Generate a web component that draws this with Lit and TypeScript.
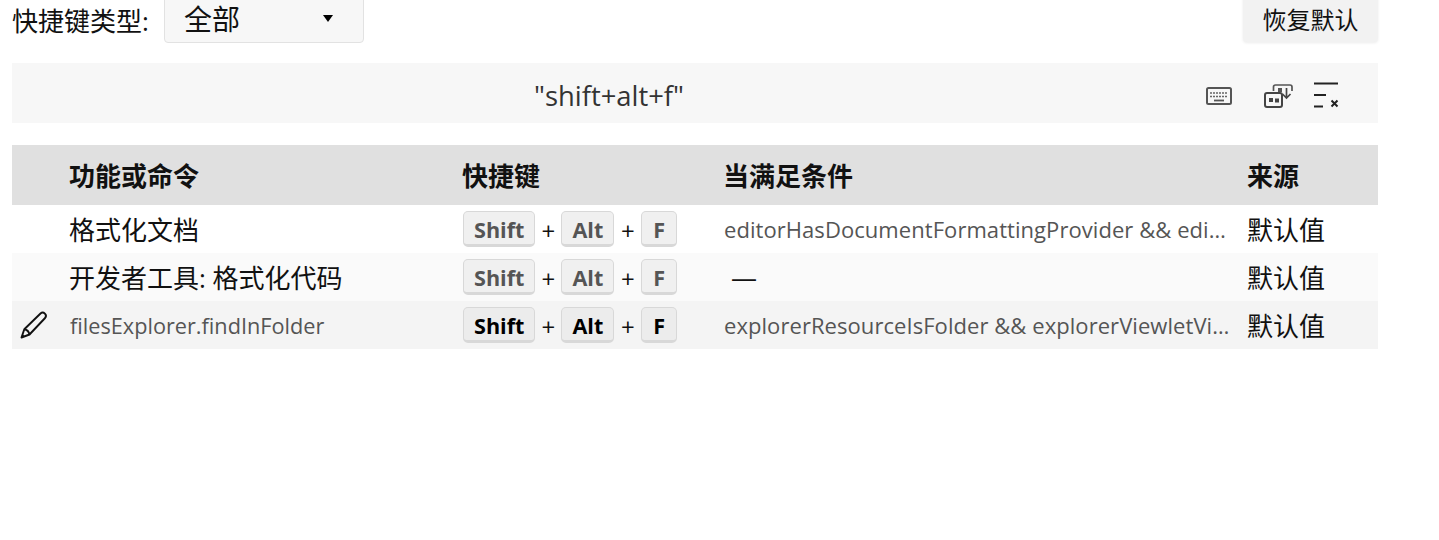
import { LitElement, html, css, svg, unsafeCSS } from "lit";
import { customElement } from "lit/decorators.js";

const FONT = unsafeCSS(`"Open Sans", "Noto Sans CJK SC", sans-serif`);

interface Row {
  command: string;
  keys: string[];
  when: string;
  source: string;
  latin?: boolean;
  editing?: boolean;
}

const ROWS: Row[] = [
  {
    command: "格式化文档",
    keys: ["Shift", "Alt", "F"],
    when: "editorHasDocumentFormattingProvider && editor",
    source: "默认值",
  },
  {
    command: "开发者工具: 格式化代码",
    keys: ["Shift", "Alt", "F"],
    when: "—",
    source: "默认值",
  },
  {
    command: "filesExplorer.findInFolder",
    keys: ["Shift", "Alt", "F"],
    when: "explorerResourceIsFolder && explorerViewletVisib",
    source: "默认值",
    latin: true,
    editing: true,
  },
];

const keyboardIcon = svg`<svg width="28" height="20" viewBox="0 0 28 20" fill="none">
  <rect x="2" y="2" width="24" height="16" rx="1.5" stroke="#555" stroke-width="2"/>
  <path d="M5 7h18M5 10.500h18" stroke="#666" stroke-width="1.500" stroke-dasharray="2 1"/>
  <path d="M9 14.500h10" stroke="#555" stroke-width="1.800"/>
</svg>`;

const recordIcon = svg`<svg class="rec" width="30" height="26" viewBox="0 0 30 26" fill="none">
  <path d="M10.500 8V4A2 2 0 0 1 12.500 2H27a2 2 0 0 1 2 2v4" stroke="#555" stroke-width="1.700"/>
  <rect x="15" y="5" width="4" height="4" fill="#555"/>
  <path d="M23.500 5v10M19.500 11l4 4 4-4" stroke="#444" stroke-width="1.700"/>
  <rect x="2" y="10" width="17" height="14" rx="2" stroke="#444" stroke-width="2"/>
  <rect x="6" y="15" width="4" height="4" fill="#444"/>
  <rect x="12" y="15.500" width="4" height="4" fill="#444"/>
</svg>`;

const clearIcon = svg`<svg width="28" height="28" viewBox="0 0 28 28" fill="none">
  <path d="M1 1.500h24M1 13h12M1 24.500h9" stroke="#222" stroke-width="1.800"/>
  <path d="M18.500 18.500l6 6M24.500 18.500l-6 6" stroke="#222" stroke-width="2"/>
</svg>`;

const pencilIcon = svg`<svg width="30" height="30" viewBox="0 0 30 30" fill="none">
  <path d="M21.500 3.500c1.400-1.200 3.200-1 4.400.2 1.200 1.200 1.300 3 .2 4.300L10.500 24.500 2.500 27.500l2.800-8.200z" stroke="#111" stroke-width="1.900" stroke-linejoin="round"/>
  <path d="M5.300 19.300c2.500.4 4.600 2.500 5.200 5.200" stroke="#111" stroke-width="1.900"/>
  <path d="M2.500 27.500l3.300-1.200-2.100-2.100z" fill="#111"/>
</svg>`;

@customElement("app-root")
export class AppRoot extends LitElement {
  static styles = css`
    :host {
      display: block;
      font-family: ${FONT};
      color: #111;
      overflow: hidden;
      height: 540px;
    }

    .page {
      width: 1366px;
      margin: -10px 0 0 12px;
    }

    .top {
      display: flex;
      align-items: flex-start;
      justify-content: space-between;
      height: 73px;
    }

    .type {
      display: flex;
      align-items: center;
      height: 53px;
    }

    .type-label {
      font-size: 26px;
      width: 152px;
      padding-top: 6px;
    }

    .select {
      width: 200px;
      height: 53px;
      box-sizing: border-box;
      background: #f7f7f7;
      border: 1px solid #e2e2e2;
      border-radius: 4px;
      padding: 0 30px 0 19px;
      display: flex;
      align-items: center;
      justify-content: space-between;
      font-size: 28px;
    }

    .select-value {
      padding-top: 2px;
    }

    .caret {
      width: 0;
      height: 0;
      border-left: 5.5px solid transparent;
      border-right: 5.5px solid transparent;
      border-top: 7px solid #000;
      margin-top: 3px;
    }

    .reset {
      width: 135px;
      height: 52px;
      box-sizing: border-box;
      padding-top: 11px;
      background: #f2f2f2;
      border-radius: 4px;
      box-shadow: 0 1px 3px rgba(0, 0, 0, 0.08);
      font-size: 24px;
      text-align: center;
    }

    .search {
      height: 60px;
      background: #f7f7f7;
      position: relative;
      display: flex;
      align-items: center;
      justify-content: center;
      padding: 4px 172px 0 0;
      box-sizing: border-box;
      margin-bottom: 22px;
    }

    .search-text {
      color: #333;
      font-size: 27.4px;
    }

    .icons {
      position: absolute;
      top: 6px;
      bottom: 0;
      left: 1193px;
      display: flex;
      align-items: center;
    }

    .icons svg {
      display: block;
    }

    .icons .rec {
      margin: 0 20px 0 30px;
    }

    .grid {
      display: grid;
      grid-template-columns: 58px 393px 261px 524px 130px;
    }

    .row {
      display: grid;
      grid-column: 1 / -1;
      grid-template-columns: subgrid;
      align-items: center;
      height: 48px;
    }

    .row.head {
      height: 60px;
      background: #e0e0e0;
      font-weight: 700;
      font-size: 26px;
    }

    .row.head span {
      margin-left: -1px;
    }

    .row.even {
      background: #fafafa;
    }

    .row.active {
      background: #f4f4f4;
    }

    .cmd {
      font-size: 26px;
      white-space: nowrap;
      margin-left: -1px;
    }

    .cmd.latin {
      font-size: 21.7px;
      color: #555;
      margin-left: 0;
    }

    .keys {
      display: flex;
      align-items: center;
    }

    .key {
      box-sizing: border-box;
      height: 36px;
      min-width: 36px;
      padding: 0 10px;
      background: #f0f0f0;
      border: 1px solid #d8d8d8;
      border-bottom: 3px solid #d8d8d8;
      border-radius: 5px;
      font-size: 21.6px;
      font-weight: 700;
      line-height: 35px;
      text-align: center;
      color: #555;
    }

    .active .key {
      color: #000;
      background: #ececec;
    }

    .plus {
      width: 26px;
      text-align: center;
      font-size: 24px;
      padding-top: 2px;
    }

    .plus ~ .plus {
      width: 27px;
    }

    .when {
      font-size: 22px;
      letter-spacing: 0.06px;
      color: #555;
      white-space: nowrap;
      overflow: hidden;
      text-overflow: ellipsis;
      padding-right: 16px;
    }

    .when.empty {
      color: #111;
      font-size: 26px;
      padding-left: 7px;
    }

    .source {
      font-size: 26px;
      margin-left: -1px;
    }

    .edit {
      display: flex;
      padding-left: 7px;
    }
  `;

  render() {
    return html`
      <div class="page">
        <div class="top">
          <div class="type">
            <span class="type-label">快捷键类型:</span>
            <div class="select"><span class="select-value">全部</span><span class="caret"></span></div>
          </div>
          <div class="reset">恢复默认</div>
        </div>
        <div class="search">
          <span class="search-text">"shift+alt+f"</span>
          <div class="icons">${keyboardIcon}${recordIcon}${clearIcon}</div>
        </div>
        <div class="grid">
          <div class="row head">
            <span></span>
            <span>功能或命令</span>
            <span>快捷键</span>
            <span>当满足条件</span>
            <span>来源</span>
          </div>
          ${ROWS.map((r, i) => this.renderRow(r, i))}
        </div>
      </div>
    `;
  }

  private renderRow(r: Row, i: number) {
    const cls = r.editing ? "row active" : i % 2 === 1 ? "row even" : "row";
    return html`
      <div class=${cls}>
        <span class="edit">${r.editing ? pencilIcon : ""}</span>
        <span class="cmd ${r.latin ? "latin" : ""}">${r.command}</span>
        <span class="keys">
          ${r.keys.map(
            (k, n) => html`${n > 0 ? html`<span class="plus">+</span>` : ""}<span class="key">${k}</span>`
          )}
        </span>
        <span class="when ${r.when === "—" ? "empty" : ""}">${r.when}</span>
        <span class="source">${r.source}</span>
      </div>
    `;
  }
}
